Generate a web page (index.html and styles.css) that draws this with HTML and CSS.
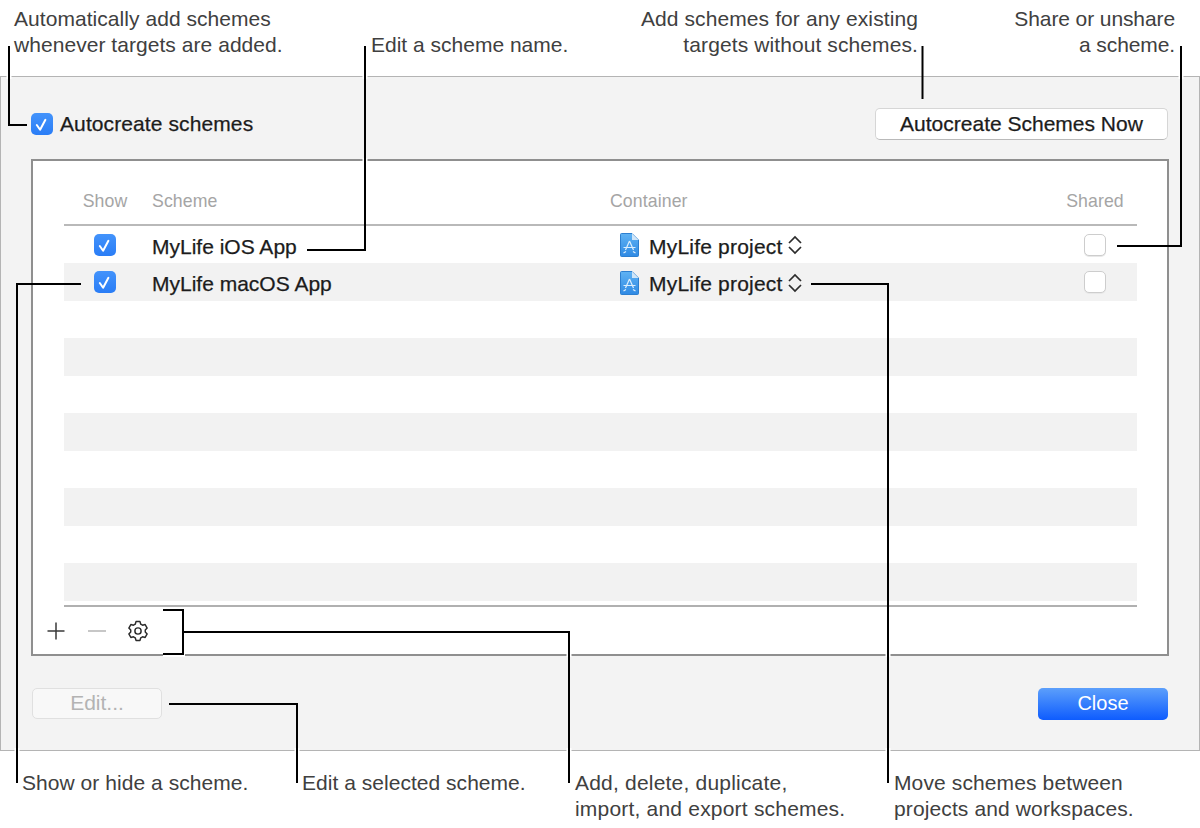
FILE: index.html
```html
<!DOCTYPE html>
<html lang="en">
<head>
<meta charset="utf-8">
<title>Manage Schemes</title>
<link rel="stylesheet" href="styles.css">
</head>
<body>
<div class="page">
  <svg class="defs" width="0" height="0"><defs><linearGradient id="docfill" x1="0" y1="0" x2="0" y2="1"><stop offset="0" stop-color="#5fb2f3"/><stop offset="1" stop-color="#2f8ae4"/></linearGradient></defs></svg>
  <main class="dialog">
    <div class="top-row">
      <label class="check-label"><span class="check on"><svg viewBox="0 0 22 22"><path d="M5.800 12l3.300 4.800 5.300-10"/></svg></span>Autocreate schemes</label>
      <button class="btn btn-auto">Autocreate Schemes Now</button>
    </div>
    <section class="panel">
      <div class="head row-grid">
        <div class="c-show">Show</div><div class="c-name-head">Scheme</div><div>Container</div><div class="c-show">Shared</div>
      </div>
      <div class="rows">
        <div class="row row-grid">
          <div class="c-show"><span class="check on"><svg viewBox="0 0 22 22"><path d="M5.800 12l3.300 4.800 5.300-10"/></svg></span></div>
          <div class="c-name">MyLife iOS App</div>
          <div class="c-cont"><svg class="doc" viewBox="0 0 19 24"><path class="doc-body" d="M.5 1.5a1 1 0 0 1 1-1H12L18.500 7v15.500a1 1 0 0 1-1 1h-16a1 1 0 0 1-1-1z"/><path class="doc-fold" d="M12 .5V7h6.500z"/><path class="doc-a" d="M9.500 8l-4 9M9.500 8l4 9M3.500 14.500h12M6 18.500l-2.500 1.500M13 18.500l2.500 1.500"/></svg>MyLife project<svg class="updown" viewBox="0 0 14 20"><path d="M1 8l6-6 6 6M1 12l6 6 6-6"/></svg></div>
          <div class="c-show"><span class="check"></span></div>
        </div>
        <div class="row row-grid">
          <div class="c-show"><span class="check on"><svg viewBox="0 0 22 22"><path d="M5.800 12l3.300 4.800 5.300-10"/></svg></span></div>
          <div class="c-name">MyLife macOS App</div>
          <div class="c-cont"><svg class="doc" viewBox="0 0 19 24"><path class="doc-body" d="M.5 1.5a1 1 0 0 1 1-1H12L18.500 7v15.500a1 1 0 0 1-1 1h-16a1 1 0 0 1-1-1z"/><path class="doc-fold" d="M12 .5V7h6.500z"/><path class="doc-a" d="M9.500 8l-4 9M9.500 8l4 9M3.500 14.500h12M6 18.500l-2.500 1.500M13 18.500l2.500 1.500"/></svg>MyLife project<svg class="updown" viewBox="0 0 14 20"><path d="M1 8l6-6 6 6M1 12l6 6 6-6"/></svg></div>
          <div class="c-show"><span class="check"></span></div>
        </div>
        <div class="row"></div><div class="row"></div><div class="row"></div><div class="row"></div>
        <div class="row"></div><div class="row"></div><div class="row"></div><div class="row"></div>
      </div>
      <div class="tools">
        <svg class="tool" viewBox="0 0 20 20"><path class="t-dark" d="M10 1.500v17M1.500 10h17"/></svg>
        <svg class="tool" viewBox="0 0 20 20"><path class="t-light" d="M1 10h18"/></svg>
        <svg class="tool gear" viewBox="-12 -12 24 24"><g class="t-gear"><circle r="3.400"/><path d="M-2.180-10.270H2.180L3-7.420 4.930-6.300 7.800-7.030 9.990-3.240 7.920-1.110V1.110L9.990 3.240 7.800 7.030 4.930 6.300 3 7.420 2.180 10.270H-2.180L-3 7.420-4.930 6.300-7.800 7.030-9.990 3.240-7.920 1.110V-1.110L-9.990-3.240-7.800-7.030-4.930-6.300-3-7.420Z"/></g></svg>
      </div>
    </section>
    <div class="bottom-row">
      <button class="btn btn-edit" disabled>Edit...</button>
      <button class="btn btn-close">Close</button>
    </div>
  </main>

  <svg class="leaders" viewBox="0 0 1200 828">
    <g class="halo">
      <path d="M9 75v4M365 75v4M1181 75v4M17 748v5M297 748v5M569 748v5M888 748v5M163 654.500h22M365 158v3M888 654v3M569 654v3"/>
    </g>
    <g class="line">
      <path d="M9 46v79h18"/>
      <path d="M365 46v204h-58"/>
      <path d="M922.500 46v53"/>
      <path d="M1181 46v200h-64"/>
      <path d="M81 284H17v499"/>
      <path d="M811 284h77v499"/>
      <path d="M163 610h20v44h-20M183 632h386v151"/>
      <path d="M169 704h128v79"/>
    </g>
  </svg>

  <p class="note n-auto">Automatically add schemes<br>whenever targets are added.</p>
  <p class="note n-name">Edit a scheme name.</p>
  <p class="note n-add">Add schemes for any existing<br>targets without schemes.</p>
  <p class="note n-share">Share or unshare<br>a scheme.</p>
  <p class="note n-show">Show or hide a scheme.</p>
  <p class="note n-edit">Edit a selected scheme.</p>
  <p class="note n-dup">Add, delete, duplicate,<br>import, and export schemes.</p>
  <p class="note n-move">Move schemes between<br>projects and workspaces.</p>
</div>
</body>
</html>
```
FILE: styles.css
```css
html, body { margin: 0; padding: 0; background: #fff; }
body { font-family: "Liberation Sans", Arial, sans-serif; overflow: hidden; }
.page { position: relative; width: 1200px; height: 828px; overflow: hidden; padding-top: 76px; box-sizing: border-box; }
.defs { position: absolute; }

.dialog {
  box-sizing: border-box; width: 1200px; height: 675px;
  background: #f3f3f3; border: 1px solid #b4b4b4;
  padding: 31px 31px 0 30px;
  color: #1c1c1c;
}
.top-row { display: flex; justify-content: space-between; align-items: center; height: 32px; margin-bottom: 19px; }
.check-label { display: flex; align-items: center; gap: 7px; font-size: 21px; letter-spacing: .1px; -webkit-text-stroke: .25px #1c1c1c; }
.check {
  box-sizing: border-box; display: block; width: 22px; height: 22px; border-radius: 5px;
  background: #fff; border: 1px solid #cdcdcd; box-shadow: 0 1px 0 #e8e8e8;
}
.check.on { background: linear-gradient(#4393fb, #2a7df6); border: 0; box-shadow: none; }
.check svg { display: block; width: 22px; height: 22px; fill: none; stroke: #fff; stroke-width: 2; stroke-linecap: round; stroke-linejoin: round; }

.btn { display: block; box-sizing: border-box; font-family: inherit; font-size: 21px; padding: 0 0 1px; border-radius: 5px; }
.btn-auto { width: 293px; height: 32px; background: #fff; border: 1px solid #d6d6d6; border-bottom-color: #b9b9b9; color: #1c1c1c; -webkit-text-stroke: .25px #1c1c1c; }
.btn-edit { width: 130px; height: 31px; padding-bottom: 2px; background: #f8f8f8; border: 1px solid #e0e0e0; color: #b3b3b3; }
.btn-close { width: 130px; height: 32px; padding-bottom: 2px; background: linear-gradient(#5c9ffb, #0e5cfe); border: 0; color: #fff; font-size: 20px; }

.panel {
  box-sizing: border-box; width: 1138px; height: 497px;
  background: #fff; border: 2px solid #8f8f8f;
  padding: 0 30px 0 31px;
}
.row-grid { display: grid; grid-template-columns: 82px 464px 1fr 84px; align-items: center; }
.head { height: 64.900px; padding-top: 18px; box-sizing: border-box; font-size: 17.700px; letter-spacing: .1px; color: #a5a5a5; border-bottom: 2px solid #b9b9b9; }
.c-show { display: flex; justify-content: center; }
.c-name-head { padding-left: 6px; }
.c-name { padding: 4px 0 0 6px; -webkit-text-stroke: .25px #1c1c1c; }
.rows { height: 381.100px; border-bottom: 2px solid #b0b0b0; box-sizing: border-box; }
.row { height: 37.500px; font-size: 21px; }
.row:nth-child(even) { background: #f2f2f2; }
.c-cont { display: flex; align-items: center; padding: 4px 0 0 10px; letter-spacing: .2px; -webkit-text-stroke: .25px #1c1c1c; }
.doc { width: 19px; height: 24px; margin: -3px 10px 0 0; }
.doc-body { fill: url(#docfill); stroke: #2d7fd0; stroke-width: 1; }
.doc-fold { fill: #cfe5f8; }
.doc-a { fill: none; stroke: #dceefc; stroke-width: 1.200; }
.updown { width: 14px; height: 20px; margin: -3px 0 0 5px; fill: none; stroke: #2c2c2c; stroke-width: 1.700; }

.tools { display: flex; align-items: center; height: 49px; margin-left: -31px; padding-left: 13px; gap: 20.500px; }
.tool { width: 20px; height: 20px; }
.gear { width: 22px; height: 22px; }
.tool .t-dark { stroke: #3a3a3a; stroke-width: 1.500; fill: none; }
.tool .t-light { stroke: #b5b5b5; stroke-width: 1.500; fill: none; }
.t-gear { fill: none; stroke: #2b2b2b; stroke-width: 1.600; stroke-linejoin: round; }

.bottom-row { display: flex; justify-content: space-between; margin-top: 32px; padding-left: 1px; }

.leaders { position: absolute; left: 0; top: 0; width: 1200px; height: 828px; pointer-events: none; }
.line path { fill: none; stroke: #000; stroke-width: 2; }
.halo path { fill: none; stroke: #fff; stroke-width: 5; }

.note { position: absolute; margin: 0; font-size: 21px; line-height: 26px; letter-spacing: .12px; color: #404040; white-space: nowrap; }
.n-auto { left: 14px; top: 6px; letter-spacing: .05px; }
.n-name { left: 371px; top: 32px; letter-spacing: 0; }
.n-add { right: 282px; top: 6px; text-align: right; letter-spacing: .1px; }
.n-share { right: 25px; top: 6px; text-align: right; letter-spacing: -.1px; }
.n-show { left: 22px; top: 770px; letter-spacing: .05px; }
.n-edit { left: 302px; top: 770px; letter-spacing: .03px; }
.n-dup { left: 575px; top: 770px; letter-spacing: .2px; }
.n-move { left: 894px; top: 770px; }
```
